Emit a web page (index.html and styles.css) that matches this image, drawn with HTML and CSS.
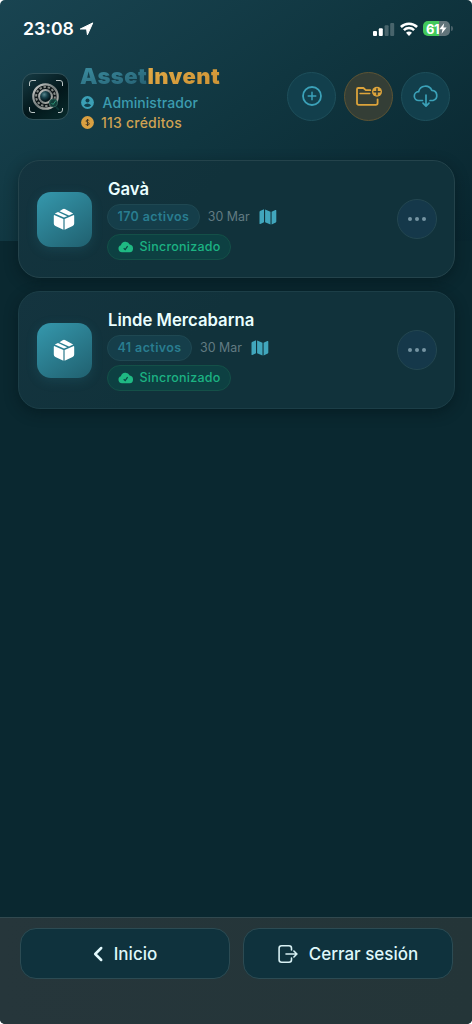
FILE: index.html
```html
<!DOCTYPE html>
<html lang="es">
<head>
<meta charset="utf-8">
<title>AssetInvent</title>
<link rel="stylesheet" href="styles.css">
</head>
<body>
<svg class="sprite" width="0" height="0" aria-hidden="true">
  <symbol id="box" viewBox="0 0 22 22">
    <path fill="#fff" d="M1.1 6.9 10.4 10.9V21.7L2.4 18Q.8 17.2.8 15.6V8Q.8 7.2 1.1 6.9ZM20.9 6.9 11.6 10.9V21.7L19.6 18Q21.2 17.2 21.2 15.6V8Q21.2 7.2 20.9 6.9ZM1.8 5.6 5 4 14.2 8.2 11 9.6ZM6.5 3.2 9.6 1.2Q11 .4 12.4 1.2L20.2 5.6 16 7.5Z"/>
  </symbol>
  <symbol id="map" viewBox="0 0 18 16">
    <path fill="#41a6bc" d="M.5 3Q.5 2.4 1 2.1L5 .3V13.2L1.4 15Q.5 15.3.5 14.4ZM6.1.4 11.5 2.8V15.6L6.1 13.2ZM12.6 2.8 16.3 1Q17.3.6 17.3 1.6V12.6Q17.3 13.3 16.8 13.6L12.6 15.6Z"/>
  </symbol>
  <symbol id="cloud-ok" viewBox="0 0 16 12">
    <path fill="#1fb983" d="M4 11.3A3.6 3.6 0 0 1 2.9 4.3 4.7 4.7 0 0 1 11.7 3.6 3.9 3.9 0 0 1 11.8 11.3Z"/>
    <path d="M5.7 7.2 7.2 8.6 9.6 5.2" fill="none" stroke="#0c4543" stroke-width="1.2"/>
  </symbol>
</svg>
<main class="screen">
  <section class="top">
    <div class="status">
      <span class="clock">23:08</span>
      <svg class="loc" width="15" height="14" viewBox="0 0 15 14"><path fill="#fff" stroke="#fff" stroke-linejoin="round" d="M13.8.9 8.4 12.8 7.6 7H1.3Z"/></svg>
      <svg class="signal" width="22" height="14" viewBox="0 0 22 14"><g fill="#fff"><rect x="0" y="9" width="4" height="5" rx="1"/><rect x="5.8" y="6.3" width="4" height="7.7" rx="1"/><g opacity=".24"><rect x="11.6" y="3.3" width="4" height="10.7" rx="1"/><rect x="17.2" y="1" width="4" height="13" rx="1"/></g></g></svg>
      <svg class="wifi" width="18" height="14" viewBox="0 0 18 14"><g fill="none" stroke="#fff" stroke-width="2.5"><path d="M.9 5A11.5 11.5 0 0 1 17.1 5"/><path d="M3.9 8.2A7.3 7.3 0 0 1 14.1 8.2"/></g><path fill="#fff" d="M9 13.9 6 10.8Q9 8.4 12 10.8Z"/></svg>
      <div class="battery"><span>61</span><svg width="8" height="11" viewBox="0 0 8 11"><path fill="#fff" d="M5.2.3.3 6.2H3.5L2.6 10.7 7.6 4.6H4.4Z"/></svg></div>
      <i class="cap"></i>
    </div>
    <header class="header">
      <div class="logo">
        <svg width="46" height="46" viewBox="0 0 46 46">
          <defs><linearGradient id="metal" x1="0" y1="0" x2="1" y2="1"><stop offset="0" stop-color="#d2d4d1"/><stop offset=".5" stop-color="#737b7b"/><stop offset="1" stop-color="#c5c4bd"/></linearGradient><radialGradient id="lens" cx=".4" cy=".35"><stop offset="0" stop-color="#58868d"/><stop offset=".5" stop-color="#16404a"/><stop offset="1" stop-color="#03161c"/></radialGradient></defs>
          <path d="M6.5 12V9Q6.5 6.5 9 6.5H13M33 6.5H37Q39.5 6.5 39.5 9V12M39.5 34V36Q39.5 38.5 37 38.5H35M6.5 33V36Q6.5 38.5 9 38.5H12" fill="none" stroke="#bac5c5" stroke-width="1"/>
          <circle cx="22.5" cy="22.5" r="12.2" fill="#0c1518" stroke="url(#metal)" stroke-width="2.2"/>
          <circle cx="22.5" cy="22.5" r="9.4" fill="none" stroke="#858a86" stroke-width="2" stroke-dasharray="2.4 1.8"/>
          <circle cx="22.5" cy="22.5" r="6.4" fill="url(#lens)" stroke="url(#metal)" stroke-width="2"/>
          <circle cx="30.5" cy="29" r="4" fill="#113e39" stroke="#2c5b54"/><path d="m33 33 3 3" stroke="#0a3433" stroke-width="2"/><path d="m28.5 29 1.5 1.5 3-4" stroke="#2f9275" fill="none"/>
        </svg>
      </div>
      <div class="identity">
        <h1 class="brand"><span class="asset">Asset</span><span class="invent">Invent</span></h1>
        <div class="meta user"><svg width="13" height="13" viewBox="0 0 13 13"><circle cx="6.5" cy="6.5" r="6.4" fill="#3b9fb5"/><circle cx="6.5" cy="4.6" r="2" fill="#123f4c"/><path d="M2.8 9.2Q6.5 5.8 10.2 9.2 6.5 13 2.8 9.2" fill="#123f4c"/></svg><span>Administrador</span></div>
        <div class="meta credits"><svg width="13" height="13" viewBox="0 0 13 13"><circle cx="6.5" cy="6.5" r="6.4" fill="#d9a041"/><path d="M8.3 4.8C7.8 3.7 5 3.8 5 5.1S8.3 6.2 8.3 7.8 5.1 9.4 4.7 8M6.5 3v7" fill="none" stroke="#473b25" stroke-width="1"/></svg><span>113 créditos</span></div>
      </div>
      <nav class="actions">
        <button class="round" aria-label="Añadir"><svg width="22" height="22" viewBox="0 0 22 22" fill="none" stroke="#3ba1b8" stroke-width="1.8" stroke-linecap="round"><circle cx="11" cy="11" r="9"/><path d="M11 7.2v7.6M7.2 11h7.6" stroke-width="1.5"/></svg></button>
        <button class="round amber" aria-label="Nueva carpeta"><svg width="28" height="22" viewBox="0 0 28 22" fill="none" stroke="#dca33b" stroke-width="1.8" stroke-linecap="round" stroke-linejoin="round"><path d="M15.3 5.2H10.8L8.4 3H3.3Q2 3 2 4.3V18Q2 19.8 3.8 19.8H20.8Q22.6 19.8 22.6 18V14.3"/><path d="M5 8.5H14.7" stroke-width="1.5"/><circle cx="22" cy="6.7" r="5" fill="#dca33b" stroke="none"/><path d="M22 3.7v6M19 6.7h6" stroke="#343e36" stroke-width="1.5"/></svg></button>
        <button class="round" aria-label="Descargar"><svg width="26" height="24" viewBox="0 0 26 24" fill="none" stroke="#3ba1b8" stroke-width="1.7" stroke-linecap="round" stroke-linejoin="round"><path d="M9.5 16.5H5.8A4.4 4.4 0 0 1 5.6 7.7 7 7 0 0 1 18.8 6.3 5.2 5.2 0 0 1 20 16.5H17"/><path d="M13 11V22M10 19.2 13 22.2 16 19.2"/></svg></button>
      </nav>
    </header>
  </section>
  <section class="list">
    <article class="card">
      <div class="tile"><svg width="22" height="22"><use href="#box"/></svg></div>
      <div class="body">
        <h2 class="title">Gavà</h2>
        <div class="line"><span class="pill count">170 activos</span><span class="date">30 Mar</span><svg width="18" height="16"><use href="#map"/></svg></div>
        <span class="pill sync"><svg width="16" height="12"><use href="#cloud-ok"/></svg>Sincronizado</span>
      </div>
      <button class="more" aria-label="Más"><i></i><i></i><i></i></button>
    </article>
    <article class="card">
      <div class="tile"><svg width="22" height="22"><use href="#box"/></svg></div>
      <div class="body">
        <h2 class="title">Linde Mercabarna</h2>
        <div class="line"><span class="pill count">41 activos</span><span class="date">30 Mar</span><svg width="18" height="16"><use href="#map"/></svg></div>
        <span class="pill sync"><svg width="16" height="12"><use href="#cloud-ok"/></svg>Sincronizado</span>
      </div>
      <button class="more" aria-label="Más"><i></i><i></i><i></i></button>
    </article>
  </section>
  <footer class="footer">
    <button class="wide"><svg class="back" width="10" height="16" viewBox="0 0 10 16"><path d="M8.2 2 2.2 8l6 6" fill="none" stroke="#e3fafd" stroke-width="2.5" stroke-linecap="round" stroke-linejoin="round"/></svg><span>Inicio</span></button>
    <button class="wide"><svg class="exit" width="20" height="20" viewBox="0 0 20 20" fill="none" stroke="#d8f0f3" stroke-width="1.6" stroke-linecap="round" stroke-linejoin="round"><path d="M13.5 6V4.3Q13.5 1.8 11 1.8H3.6Q1.1 1.8 1.1 4.3V15.7Q1.1 18.2 3.6 18.2H11Q13.5 18.2 13.5 15.7V14M8 10H18.8M15.9 7 18.9 10 15.9 13"/></svg><span>Cerrar sesión</span></button>
  </footer>
</main>
</body>
</html>
```
FILE: styles.css
```css
* { box-sizing: border-box; }
body { margin: 0; background: #fff; font-family: Inter, "Liberation Sans", sans-serif; }
button { font: inherit; padding: 0; }
svg { flex: none; display: block; }
.sprite { position: absolute; }
.screen { width: 472px; height: 1024px; display: flex; flex-direction: column; border-radius: 5px; overflow: hidden; background: linear-gradient(145deg, #194451 0%, #103640 48%, #09262f 100%) 0 0 / 100% 241px no-repeat, #0a2830; }
.top { height: 160px; }
.status { height: 57px; padding: 0 19px 0 23px; display: flex; align-items: center; color: #fff; }
.clock { font-size: 17.7px; font-weight: 600; line-height: 20px; }
.loc { margin-left: 5px; }
.signal { margin-left: auto; }
.wifi { margin-left: 5px; }
.battery { display: flex; align-items: center; margin-left: 5px; padding-left: 3px; width: 27px; height: 15px; border-radius: 5px; background: linear-gradient(90deg, #43c95b 61%, #61747a 61%); font-size: 13px; font-weight: 700; letter-spacing: -.4px; }
.cap { width: 2px; height: 5px; margin-left: 1px; border-radius: 0 2px 2px 0; background: #486068; }
.header { display: flex; align-items: center; padding: 0 22px 0 22px; height: 78px; }
.logo { width: 47px; height: 47px; border: 1px solid #315159; border-radius: 11px; background: linear-gradient(145deg, #163b44, #03171b 55%, #082b2c); overflow: hidden; }
.identity { margin-left: 12px; display: flex; flex-direction: column; padding-top: 3px; }
.brand { margin: 0 0 4px; font-size: 22px; line-height: 26px; font-weight: 900; letter-spacing: .45px; margin-left: -1px; }
.asset, .invent { color: transparent; background-clip: text; -webkit-background-clip: text; }
.asset { background-image: linear-gradient(165deg, #38879a 20%, #286577 85%); }
.invent { background-image: linear-gradient(160deg, #e4ac47, #cb9134); }
.meta { display: flex; align-items: center; height: 20px; font-size: 14px; font-weight: 500; white-space: nowrap; }
.user { gap: 8.5px; color: #3c9caf; letter-spacing: .08px; }
.credits { gap: 7px; color: #cfa252; letter-spacing: .22px; }
.actions { margin-left: auto; display: flex; gap: 8px; }
.round { display: grid; place-items: center; width: 49px; height: 49px; border-radius: 50%; background: #123f4c; border: 1.5px solid #1e4f5b; }
.amber { background: #343e36; border-color: #5d5434; }
.list { display: flex; flex-direction: column; gap: 13px; padding: 0 17px 0 18px; }
.card { height: 118px; display: flex; align-items: center; padding: 0 17px 0 17.5px; border: 1px solid #24434b; border-radius: 22px; background: linear-gradient(135deg, #14343f, #11323b 40%); box-shadow: 0 4px 14px rgba(0, 18, 23, .45); }
.card + .card { border-color: #1c3e47; }
.tile { width: 55px; height: 55px; border-radius: 14px; display: grid; place-items: center; background: linear-gradient(145deg, #3598ad, #20606f); box-shadow: 0 3px 12px rgba(44, 135, 156, .2); }
.body { margin-left: 15.5px; padding-bottom: 1px; display: flex; flex-direction: column; align-items: flex-start; }
.title { margin: 0 0 4px; padding-left: 1px; color: #eaffff; font-size: 16.7px; font-weight: 600; line-height: 22px; }
.line { display: flex; align-items: center; margin-bottom: 4px; }
.date { margin: 0 9px 0 8px; color: #617b82; font-size: 12.4px; }
.pill { display: flex; align-items: center; height: 26px; padding: 0 9.5px; border-radius: 13px; border: 1px solid #1f4852; font-size: 12.5px; font-weight: 500; }
.count { background: #153e4a; color: #297d90; font-weight: 600; letter-spacing: .4px; }
.sync { gap: 6px; background: #0d4042; border-color: #145048; color: #1cb282; letter-spacing: .25px; }
.more { margin-left: auto; width: 40px; height: 40px; border-radius: 50%; border: 1px solid #234650; background: #15384a; display: flex; align-items: center; justify-content: center; gap: 3px; }
.more i { width: 4px; height: 4px; border-radius: 50%; background: #7594a2; }
.footer { margin-top: auto; height: 107px; border-top: 1px solid #31494f; padding: 10px 19px 0 20px; display: flex; align-items: flex-start; gap: 13px; background: linear-gradient(90deg, #26363b, #243538); }
.wide { width: 210px; height: 51px; border: 1px solid #2c4b53; border-radius: 16px; background: #0f323d; color: #dff8fa; font-size: 17px; font-weight: 500; display: flex; align-items: center; justify-content: center; gap: 11px; }
```
